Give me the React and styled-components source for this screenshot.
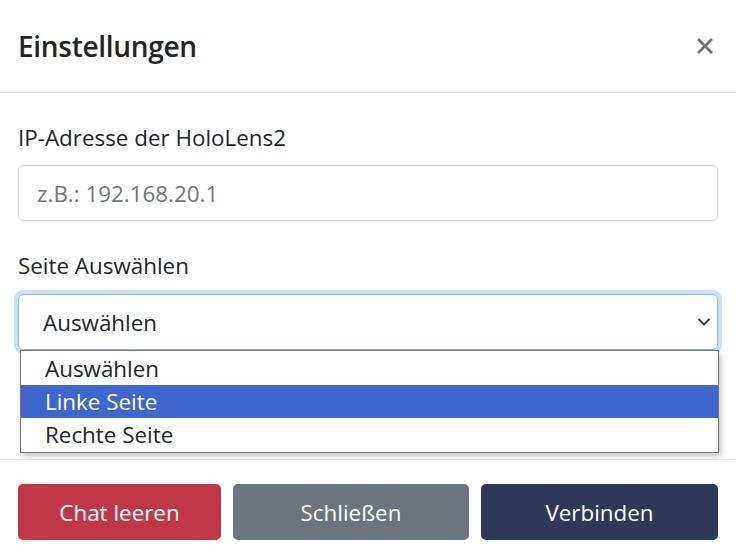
import React from "react";
import styled, { createGlobalStyle } from "styled-components";

const Global = createGlobalStyle`
  html, body { margin: 0; padding: 0; background: #fff; }
  body { font-family: "Open Sans", "Noto Sans", sans-serif; color: #212529; }
  * { box-sizing: border-box; }
`;

const Modal = styled.div`
  width: 736px;
  height: 554px;
  background: #fff;
  display: flex;
  flex-direction: column;
`;

const Header = styled.div`
  height: 93px;
  padding: 0 19px 0 18px;
  display: flex;
  align-items: center;
  justify-content: space-between;
  border-bottom: 1px solid #dee2e6;
`;

const Title = styled.h5`
  margin: 0;
  font-size: 28px;
  font-weight: 600;
  letter-spacing: -0.3px;
  color: #212529;
`;

const Close = styled.button`
  border: 0;
  background: transparent;
  padding: 0;
  width: 24px;
  height: 24px;
  display: flex;
  align-items: center;
  justify-content: center;
  cursor: pointer;
`;

const Body = styled.div`
  padding: 29px 18px 0 18px;
  height: 367px;
  border-bottom: 1px solid #e5e7ea;
`;

const Label = styled.label`
  display: block;
  font-size: 22.4px;
  line-height: 32px;
  margin-bottom: ${(p) => p.$mb}px;
  color: #212529;
`;

const Input = styled.input`
  display: block;
  width: 100%;
  height: 56px;
  border: 1px solid #ced4da;
  border-radius: 5px;
  padding: 0 18px;
  font-family: inherit;
  font-size: 22.4px;
  color: #212529;
  margin-bottom: 29px;
  outline: none;
  &::placeholder { color: #6c757d; }
`;

const SelectWrap = styled.div`
  position: relative;
`;

const SelectBox = styled.div`
  height: 56px;
  border: 1px solid #86b7fe;
  border-radius: 5px;
  box-shadow: 0 0 0 4px rgba(13, 110, 253, 0.22);
  padding: 0 6px 0 24px;
  display: flex;
  align-items: center;
  justify-content: space-between;
  font-size: 22.4px;
  color: #212529;
`;

const Dropdown = styled.ul`
  position: absolute;
  top: 56px;
  left: 2px;
  right: -1px;
  margin: 0;
  padding: 1px 0;
  list-style: none;
  background: #fff;
  border: 1px solid #767676;
  box-shadow: 2px 3px 6px rgba(0, 0, 0, 0.25);
  z-index: 5;
`;

const Option = styled.li`
  height: 33px;
  line-height: 33px;
  padding: 0 24px;
  font-size: 22.4px;
  background: ${(p) => (p.$active ? "#3e66ce" : "#fff")};
  color: ${(p) => (p.$active ? "#fff" : "#212529")};
`;

const Footer = styled.div`
  flex: 1;
  padding: 24px 18px 0 18px;
  display: flex;
  gap: 12px;
`;

const Button = styled.button`
  width: ${(p) => p.$w}px;
  height: 56px;
  border: 0;
  border-radius: 5px;
  background: ${(p) => p.$bg};
  color: #fff;
  font-family: inherit;
  font-size: 22.4px;
  cursor: pointer;
`;

export default function App() {
  return (
    <>
      <Global />
      <Modal>
        <Header>
          <Title>Einstellungen</Title>
          <Close aria-label="Schließen">
            <svg width="16" height="16" viewBox="0 0 16 16">
              <path d="M2 2 L14 14 M14 2 L2 14" stroke="#6f6f6f" strokeWidth="2.8" strokeLinecap="square" />
            </svg>
          </Close>
        </Header>
        <Body>
          <Label $mb={11}>IP-Adresse der HoloLens2</Label>
          <Input placeholder="z.B.: 192.168.20.1" />
          <Label $mb={12}>Seite Auswählen</Label>
          <SelectWrap>
            <SelectBox>
              <span>Auswählen</span>
              <svg width="14" height="10" viewBox="0 0 14 10">
                <path d="M2 2.5 L7 7.5 L12 2.5" fill="none" stroke="#343a40" strokeWidth="2" strokeLinecap="round" strokeLinejoin="round" />
              </svg>
            </SelectBox>
            <Dropdown>
              <Option>Auswählen</Option>
              <Option $active>Linke Seite</Option>
              <Option>Rechte Seite</Option>
            </Dropdown>
          </SelectWrap>
        </Body>
        <Footer>
          <Button $w={203} $bg="#c03848">Chat leeren</Button>
          <Button $w={236} $bg="#6c757d">Schließen</Button>
          <Button $w={237} $bg="#2e3859">Verbinden</Button>
        </Footer>
      </Modal>
    </>
  );
}
